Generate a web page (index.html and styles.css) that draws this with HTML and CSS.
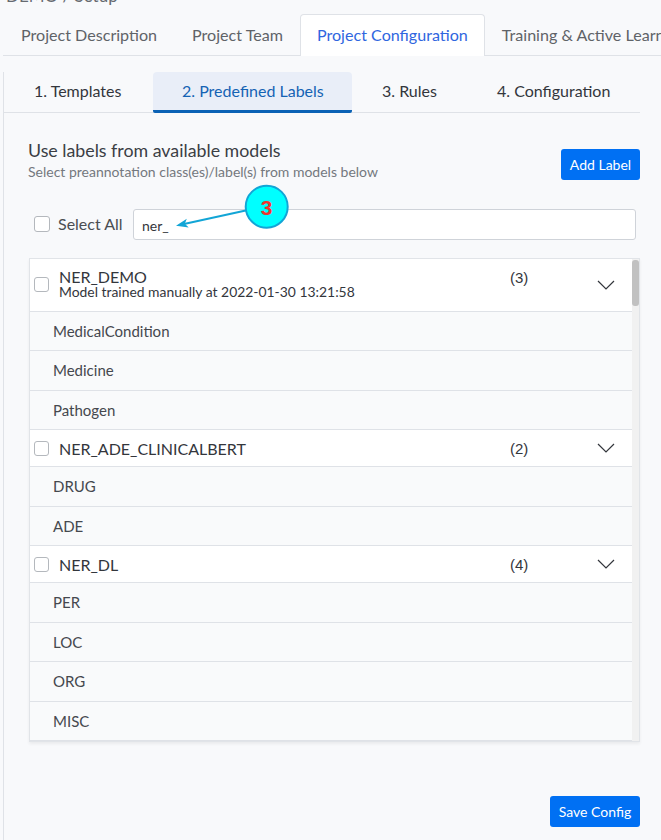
FILE: index.html
```html
<!DOCTYPE html>
<html lang="en">
<head>
<meta charset="utf-8">
<title>Project Configuration</title>
<link rel="stylesheet" href="styles.css">
</head>
<body>
<div class="page">
  <div class="crumb">DEMO / Setup</div>
  <nav class="tabs">
    <a class="tab">Project Description</a>
    <a class="tab">Project Team</a>
    <a class="tab active">Project Configuration</a>
    <a class="tab last">Training &amp; Active Learning</a>
  </nav>
  <section class="panel">
    <nav class="subtabs">
      <a class="subtab t1">1. Templates</a>
      <a class="subtab t2 active">2. Predefined Labels</a>
      <a class="subtab t3">3. Rules</a>
      <a class="subtab t4">4. Configuration</a>
    </nav>
    <div class="content">
      <div class="head">
        <div>
          <h2 class="title">Use labels from available models</h2>
          <p class="sub">Select preannotation class(es)/label(s) from models below</p>
        </div>
        <button class="btn add">Add Label</button>
      </div>
      <div class="filter">
        <label class="all"><span class="check"></span>Select All</label>
        <div class="search">ner_</div>
      </div>
      <div class="list">
        <div class="model first">
          <span class="check small"></span>
          <div class="name">NER_DEMO<small>Model trained manually at 2022-01-30 13:21:58</small></div>
          <span class="count">(3)</span>
          <svg class="chev" viewBox="0 0 18 10"><path d="M1 1l8 8 8-8"/></svg>
        </div>
        <div class="item">MedicalCondition</div>
        <div class="item">Medicine</div>
        <div class="item">Pathogen</div>
        <div class="model">
          <span class="check small"></span>
          <div class="name">NER_ADE_CLINICALBERT</div>
          <span class="count">(2)</span>
          <svg class="chev" viewBox="0 0 18 10"><path d="M1 1l8 8 8-8"/></svg>
        </div>
        <div class="item">DRUG</div>
        <div class="item">ADE</div>
        <div class="model">
          <span class="check small"></span>
          <div class="name">NER_DL</div>
          <span class="count">(4)</span>
          <svg class="chev" viewBox="0 0 18 10"><path d="M1 1l8 8 8-8"/></svg>
        </div>
        <div class="item">PER</div>
        <div class="item">LOC</div>
        <div class="item">ORG</div>
        <div class="item">MISC</div>
        <div class="track"><div class="thumb"></div></div>
      </div>
      <div class="foot"><button class="btn save">Save Config</button></div>
    </div>
  </section>
  <svg class="callout" viewBox="0 0 130 60" width="130" height="60">
    <path class="arrow-line" d="M8 34L72 20"/>
    <path class="arrow-head" d="M0 35.7L10.8 28.8L8.8 33.8L12.7 37.6Z"/>
    <circle class="bubble" cx="90.7" cy="16.7" r="21"/>
    <text class="num" x="90.5" y="25" text-anchor="middle">3</text>
  </svg>
</div>
</body>
</html>
```

FILE: styles.css
```css
* { box-sizing: border-box; }
html, body { margin: 0; height: 100%; }
body { background: #f8f9fb; font-family: Lato, "Liberation Sans", sans-serif; color: #33363c; overflow: hidden; }
.page { position: relative; width: 661px; height: 840px; overflow: hidden; }
.crumb { height: 14px; line-height: 0; font-size: 17px; color: #666a70; padding-left: 6px; margin-top: -4px; padding-bottom: 1px; }
.tabs { display: flex; height: 42px; margin: 4px 0 0 3px; border-bottom: 1px solid #dfe2e7; white-space: nowrap; font-size: 16.1px; }
.tab { line-height: 41px; color: #5f6368; padding: 0 18px; }
.tab:first-child { padding: 0 17px 0 18px; }
.tab.active { background: #fff; color: #2f66e0; border: 1px solid #dfe2e7; border-bottom: 0; border-radius: 4px 4px 0 0; height: 42px; padding: 0 16px; line-height: 40px; margin-left: -1px; }
.tab.last { padding-left: 17px; }
.panel { margin: 16px 0 0 3px; border-left: 1px solid #dfe2e7; height: 768px; }
.subtabs { display: flex; width: 636px; height: 41px; border-bottom: 1px solid #dfe2e7; font-size: 16px; color: #33363c; white-space: nowrap; }
.subtab { line-height: 38px; }
.t1 { width: 149px; padding-left: 30px; }
.t2 { width: 199px; padding-left: 29px; background: #e9eef8; color: #1563b4; border-bottom: 3px solid #0b62b5; border-radius: 4px 4px 2px 2px; height: 41px; }
.t3 { width: 145px; padding-left: 30px; }
.t4 { width: 143px; }
.content { padding: 0 0 0 25px; width: 636px; }
.head { display: flex; justify-content: space-between; align-items: flex-start; padding-top: 26px; height: 95px; margin-left: -1px; }
.title { margin: 0; font-size: 17.8px; font-weight: 400; line-height: 22px; color: #3b3e44; }
.sub { margin: 2px 0 0; font-size: 14px; line-height: 17px; color: #74787e; }
.btn { background: #0070f3; color: #fff; border: 0; border-radius: 3px; font: 14px/31px Lato, "Liberation Sans", sans-serif; height: 31px; padding: 0; }
.add { width: 79px; margin-top: 10px; }
.filter { display: flex; align-items: center; height: 32px; }
.all { display: flex; align-items: center; width: 104px; font-size: 16px; color: #4a4d52; padding-left: 5px; margin-bottom: 1px; }
.check { display: block; width: 16px; height: 16px; border: 1px solid #b4b8bd; border-radius: 3px; background: #fff; margin-right: 8px; flex: none; }
.search { width: 503px; height: 31px; line-height: 31px; background: #fff; border: 1px solid #cfd3d9; border-radius: 3px; padding-left: 8px; font-size: 14px; color: #33363c; }
.list { position: relative; height: 484px; margin-top: 18px; width: 611px; border: 1px solid #e1e4e8; overflow: hidden; box-shadow: 0 2px 3px rgba(0,0,0,.06); }
.model { display: flex; align-items: center; height: 37px; background: #fff; border-bottom: 1px solid #dfe2e7; padding-left: 4px; }
.model.first { height: 52.5px; }
.check.small { width: 15px; height: 15px; margin-right: 10px; }
.name { font-size: 16px; line-height: 17px; color: #33363c; width: 451px; }
.first .name { margin-top: -3px; }
.name small { display: block; font-size: 13.9px; line-height: 14px; }
.count { width: 87px; font: 15px "Liberation Sans", sans-serif; color: #33363c; }
.first .count { margin-top: -14px; }
.chev { width: 18px; height: 10px; fill: none; stroke: #33363c; stroke-width: 1.2; }
.item { height: 39.5px; line-height: 39px; padding-left: 23px; font-size: 15px; color: #45484e; background: #f9fafb; border-bottom: 1px solid #dfe2e7; }
.track { position: absolute; top: 0; right: 0; width: 7px; height: 100%; background: #f1f1f1; }
.thumb { height: 46px; background: #c1c1c1; border-radius: 3px; margin-top: 1px; }
.foot { display: flex; justify-content: flex-end; padding: 54px 0 0; width: 611px; }
.save { width: 90px; }
.callout { position: absolute; left: 176px; top: 190px; overflow: visible; }
.arrow-line { stroke: #12a5d6; stroke-width: 2; fill: none; }
.arrow-head { fill: #12a5d6; }
.bubble { fill: #0ff; stroke: #12a5d6; stroke-width: 2; }
.num { font: 700 21px "Liberation Sans", sans-serif; fill: #f0342c; }
```
